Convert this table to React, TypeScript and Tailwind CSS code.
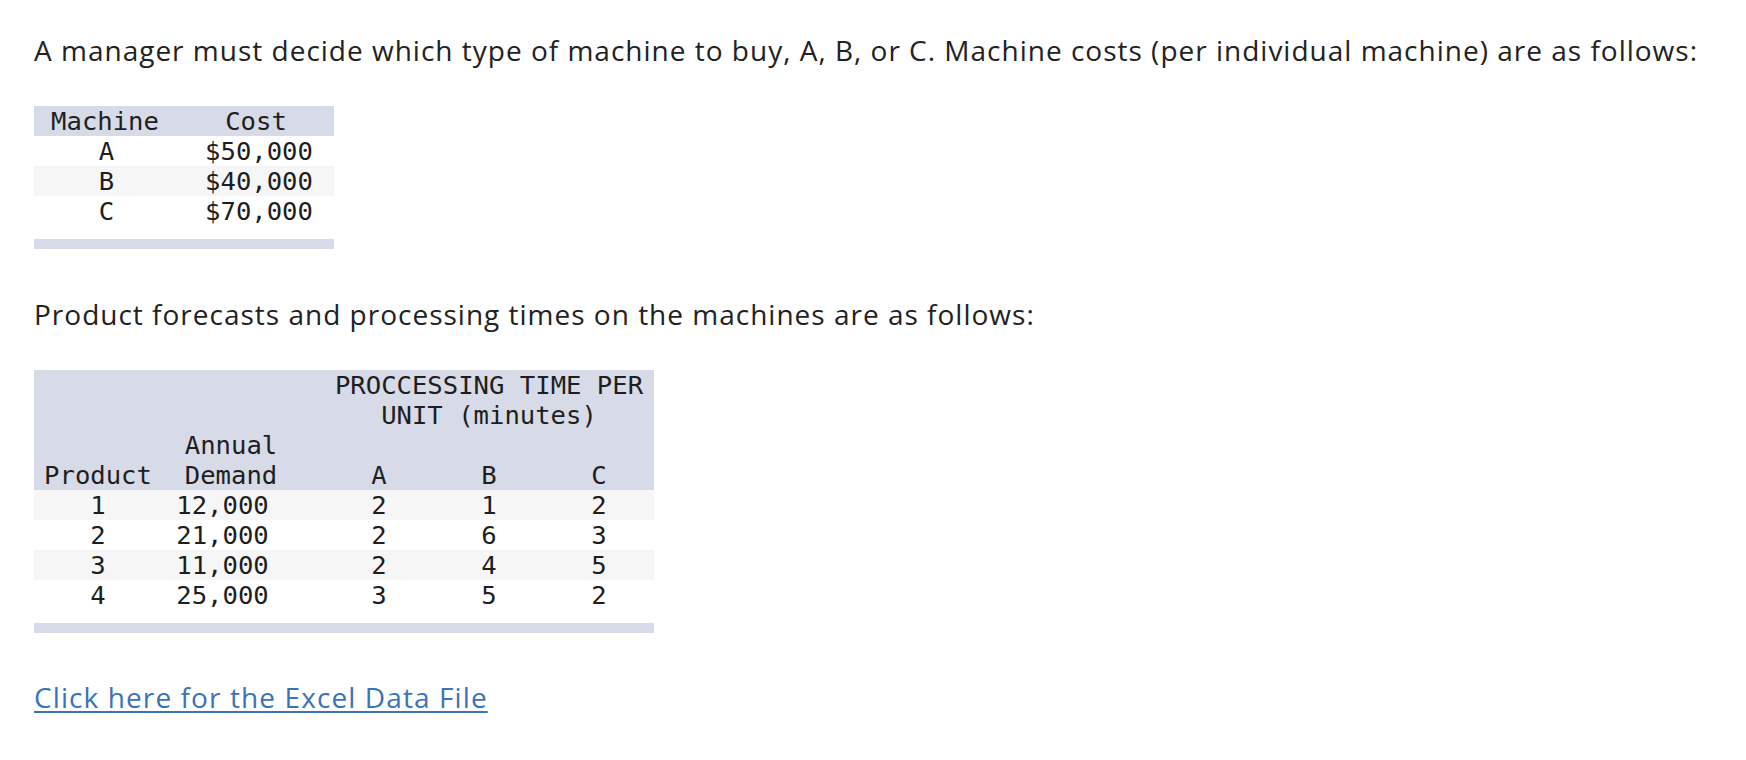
import React from 'react'

const sans = "font-['Open_Sans',Arial,sans-serif]"
const mono = "font-['DejaVu_Sans_Mono',Menlo,monospace]"

const machines = [
  { name: 'A', cost: '$50,000' },
  { name: 'B', cost: '$40,000' },
  { name: 'C', cost: '$70,000' },
]

const products = [
  { id: '1', demand: '12,000', a: '2', b: '1', c: '2' },
  { id: '2', demand: '21,000', a: '2', b: '6', c: '3' },
  { id: '3', demand: '11,000', a: '2', b: '4', c: '5' },
  { id: '4', demand: '25,000', a: '3', b: '5', c: '2' },
]

const CostTable = () => {
  return (
    <div className={`${mono} w-[300px] text-[25.6px] leading-[30px] text-[#1e1e1e]`}>
      <div className="grid grid-cols-[142px_158px] bg-[#d7dbe7]">
        <div className="text-center">Machine</div>
        <div className="text-center pl-[2px]">Cost</div>
      </div>
      {machines.map((m, i) => (
        <div key={m.name} className={`grid grid-cols-[142px_158px] ${i % 2 === 1 ? 'bg-[#f6f6f6]' : 'bg-white'}`}>
          <div className="text-center pl-[3px]">{m.name}</div>
          <div className="text-center pl-[8px]">{m.cost}</div>
        </div>
      ))}
      <div className="h-[10px] mt-[13px] bg-[#d7dbe7]" />
    </div>
  )
}

const ForecastTable = () => {
  return (
    <div className={`${mono} w-[620px] text-[25.6px] leading-[30px] text-[#1e1e1e]`}>
      {/* header spans 4 lines */}
      <div className="grid grid-cols-[128px_162px_110px_110px_110px] grid-rows-[30px_30px_30px_30px] bg-[#d7dbe7]">
        <div className="col-start-3 col-span-3 row-start-1 row-span-2 text-center">
          PROCCESSING TIME PER<br />UNIT (minutes)
        </div>
        <div className="col-start-2 row-start-3 row-span-2 text-center pr-[24px]">
          Annual<br />Demand
        </div>
        <div className="col-start-1 row-start-4 text-center">Product</div>
        <div className="col-start-3 row-start-4 text-center">A</div>
        <div className="col-start-4 row-start-4 text-center">B</div>
        <div className="col-start-5 row-start-4 text-center">C</div>
      </div>
      {products.map((p, i) => (
        <div key={p.id} className={`grid grid-cols-[128px_162px_110px_110px_110px] ${i % 2 === 0 ? 'bg-[#f6f6f6]' : 'bg-white'}`}>
          <div className="text-center">{p.id}</div>
          <div className="text-center pr-[41px]">{p.demand}</div>
          <div className="text-center">{p.a}</div>
          <div className="text-center">{p.b}</div>
          <div className="text-center">{p.c}</div>
        </div>
      ))}
      <div className="h-[10px] mt-[13px] bg-[#d7dbe7]" />
    </div>
  )
}

export default function App() {
  return (
    <div className={`${sans} min-h-[760px] bg-white pl-[34px] pt-[32px] text-[#222]`}>
      <p className="text-[28px] leading-[36px] tracking-[1px]">
        A manager must decide which type of machine to buy, A, B, or C. Machine costs (per individual machine) are as follows:
      </p>
      <div className="mt-[38px]">
        <CostTable />
      </div>
      <p className="mt-[47px] text-[28px] leading-[36px] tracking-[1px]">
        Product forecasts and processing times on the machines are as follows:
      </p>
      <div className="mt-[38px]">
        <ForecastTable />
      </div>
      <div className="mt-[46px]">
        <a href="#" className="text-[28px] leading-[36px] tracking-[1.1px] text-[#3b73b9] underline underline-offset-[3px] decoration-2">
          Click here for the Excel Data File
        </a>
      </div>
    </div>
  )
}
